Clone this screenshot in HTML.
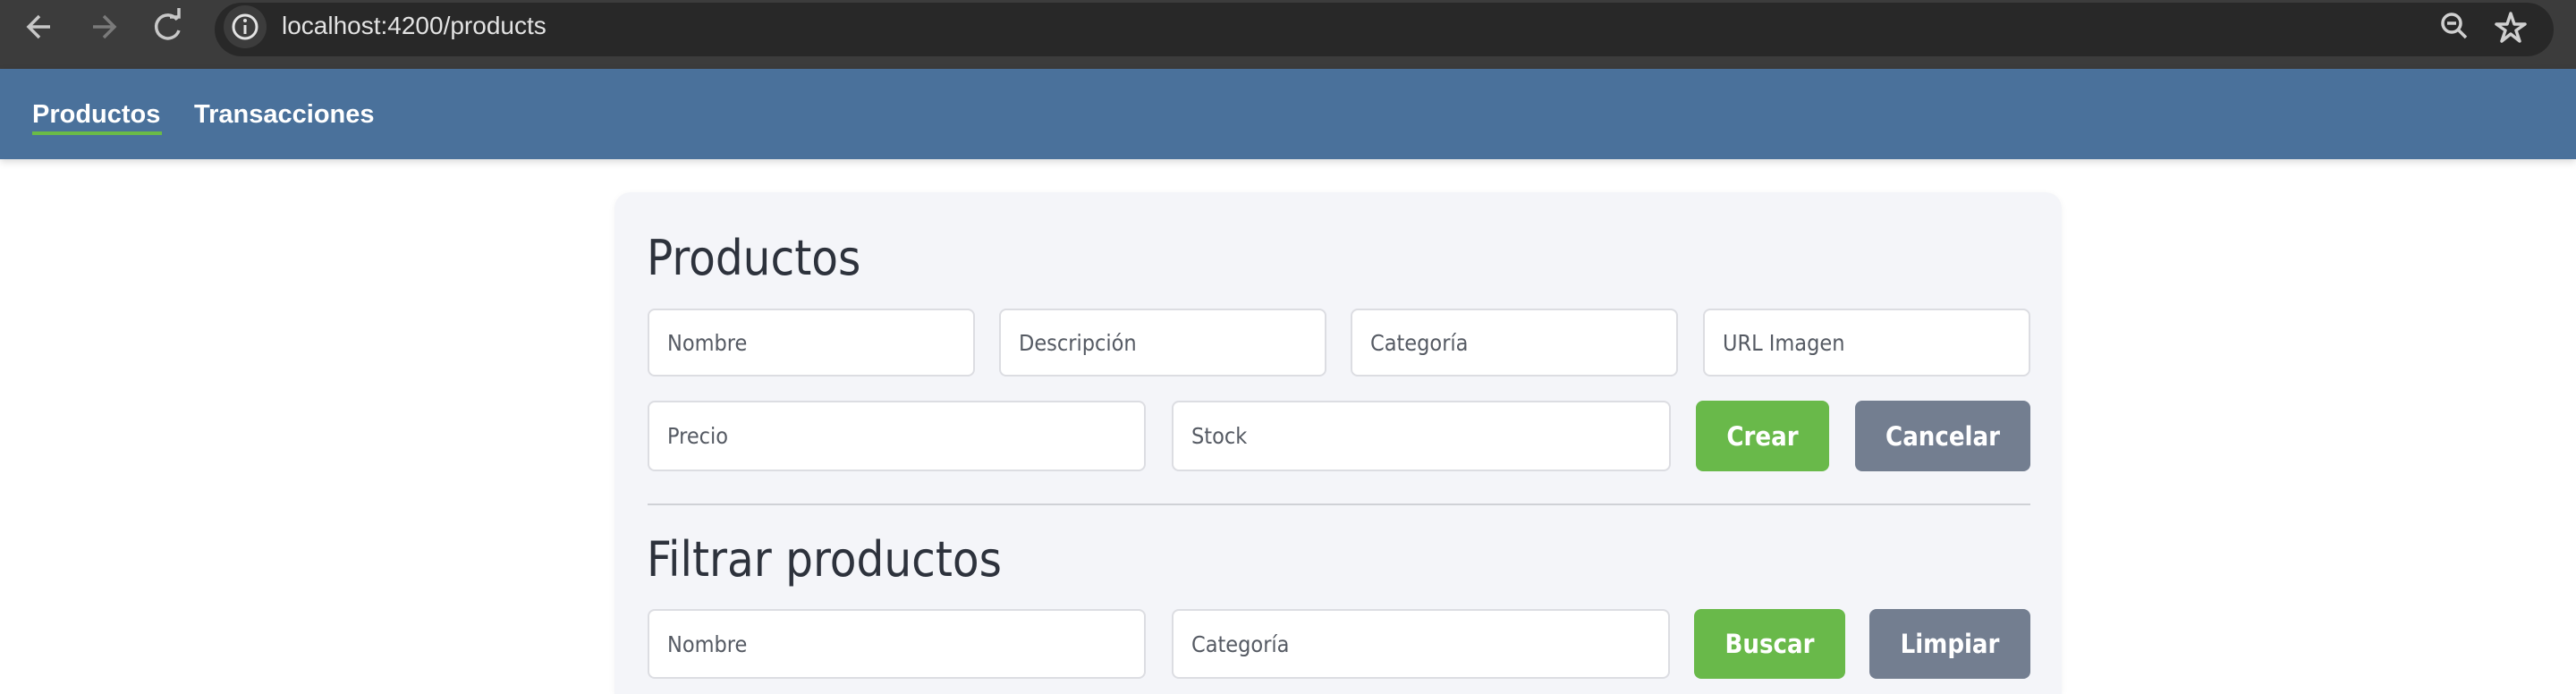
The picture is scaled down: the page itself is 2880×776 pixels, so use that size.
<!DOCTYPE html>
<html style="overflow:hidden;height:776px"><head><meta charset="utf-8"><style>
*{box-sizing:border-box;margin:0;padding:0}
body{width:2880px;height:776px;overflow:hidden;background:#fff;font-family:"DejaVu Sans","Liberation Sans",sans-serif;position:relative}
.chrome{position:absolute;left:0;top:0;width:2880px;height:77px;background:#3c3c3c}
.pill{position:absolute;left:240px;top:3px;width:2615px;height:60px;background:#282828;border-radius:30px}
.info{position:absolute;left:250px;top:6px;width:48px;height:48px;border-radius:50%;background:#3c3c3c}
.url{position:absolute;left:315px;top:13px;font-family:"Liberation Sans",sans-serif;font-size:28px;color:#e3e3e3}
.nav{position:absolute;left:0;top:77px;width:2880px;height:101px;background:#4a719b;box-shadow:0 3px 8px rgba(0,0,0,.15)}
.nav span{position:absolute;top:35px;font-family:"Liberation Sans",sans-serif;font-weight:bold;font-size:29px;color:#fff}
.ul{position:absolute;left:36px;top:147px;width:145px;height:4px;background:#6abb47}
.card{position:absolute;left:687px;top:215px;width:1618px;height:561px;background:#f4f5f9;border-radius:18px 18px 0 0;box-shadow:0 2px 8px rgba(0,0,0,.05)}
h1,h2{position:absolute;left:723px;font-weight:normal;color:#2d323c;font-family:"DejaVu Sans Condensed","DejaVu Sans",sans-serif;font-size:54px}
.in{position:absolute;background:#fff;border:2px solid #dcdde2;border-radius:8px;font-family:"DejaVu Sans Condensed","DejaVu Sans",sans-serif;font-size:25px;color:#555a63;padding-left:20px;display:flex;align-items:center}
.b{position:absolute;border-radius:8px;color:#fff;font-family:"DejaVu Sans Condensed","DejaVu Sans",sans-serif;font-weight:bold;font-size:29px;display:flex;align-items:center;justify-content:center}
.g{background:#69b94a}.s{background:#737e90}
.hr{position:absolute;left:724px;top:563px;width:1546px;height:2px;background:#cfd1d6}
</style></head><body>
<div class="chrome">
<svg style="position:absolute;left:0;top:0" width="240" height="64" fill="none" stroke-width="3.5">
<path d="M56 30H32M44 18L32 30L44 42" stroke="#c8c8c8"/>
<path d="M104 30H128M116 18L128 30L116 42" stroke="#7a7a7a"/>
<path d="M198 22A13 13 0 1 0 200 34" stroke="#c8c8c8"/><path d="M190 19H200V9" stroke="#c8c8c8"/>
</svg>
<div class="pill"></div>
<div class="info"></div>
<svg style="position:absolute;left:250px;top:6px" width="48" height="48" fill="none"><circle cx="24" cy="24" r="13" stroke="#e3e3e3" stroke-width="3"/><path d="M24 22V32" stroke="#e3e3e3" stroke-width="3"/><circle cx="24" cy="17" r="2" fill="#e3e3e3"/></svg>
<div class="url">localhost:4200/products</div>
<svg style="position:absolute;left:2720px;top:8px" width="120" height="48" fill="none" stroke="#d0d0d0" stroke-width="3.5">
<circle cx="21" cy="18" r="10"/><path d="M16 18H26M28 25L37 34"/>
<path d="M87 7L91 19H103L93 26L97 38L87 30L77 38L81 26L71 19H83Z" stroke-linejoin="round"/>
</svg>
</div>
<div class="nav"><span style="left:36px">Productos</span><span style="left:217px">Transacciones</span></div>
<div class="ul"></div>
<div class="card"></div>
<h1 style="top:257px">Productos</h1>
<div class="in" style="left:724px;top:345px;width:366px;height:76px">Nombre</div>
<div class="in" style="left:1117px;top:345px;width:366px;height:76px">Descripción</div>
<div class="in" style="left:1510px;top:345px;width:366px;height:76px">Categoría</div>
<div class="in" style="left:1904px;top:345px;width:366px;height:76px">URL Imagen</div>
<div class="in" style="left:724px;top:448px;width:557px;height:79px">Precio</div>
<div class="in" style="left:1310px;top:448px;width:558px;height:79px">Stock</div>
<div class="b g" style="left:1896px;top:448px;width:149px;height:79px">Crear</div>
<div class="b s" style="left:2074px;top:448px;width:196px;height:79px">Cancelar</div>
<div class="hr"></div>
<h2 style="top:594px">Filtrar productos</h2>
<div class="in" style="left:724px;top:681px;width:557px;height:78px">Nombre</div>
<div class="in" style="left:1310px;top:681px;width:557px;height:78px">Categoría</div>
<div class="b g" style="left:1894px;top:681px;width:169px;height:78px">Buscar</div>
<div class="b s" style="left:2090px;top:681px;width:180px;height:78px">Limpiar</div>
</body></html>
